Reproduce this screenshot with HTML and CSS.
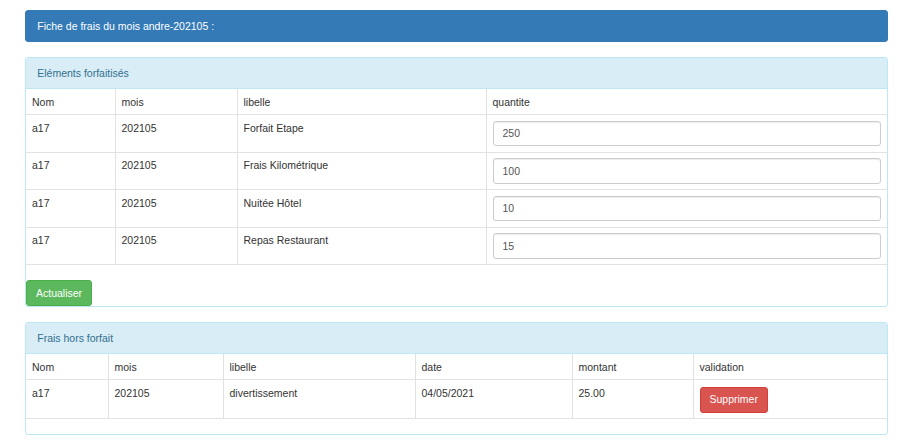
FILE: index.html
```html
<!DOCTYPE html>
<html lang="fr">
<head>
<meta charset="utf-8">
<title>Fiche de frais</title>
<link rel="stylesheet" href="styles.css">
</head>
<body>
<div class="title-bar">Fiche de frais du mois andre-202105 :</div>

<div class="panel">
  <div class="panel-heading">Eléments forfaitisés</div>
  <table class="grid">
    <colgroup><col class="w89"><col class="w122"><col class="w249"><col></colgroup>
    <tr><td>Nom</td><td>mois</td><td>libelle</td><td>quantite</td></tr>
    <tr><td>a17</td><td>202105</td><td>Forfait Etape</td><td><input class="field" type="text" value="250"></td></tr>
    <tr><td>a17</td><td>202105</td><td>Frais Kilométrique</td><td><input class="field" type="text" value="100"></td></tr>
    <tr><td>a17</td><td>202105</td><td>Nuitée Hôtel</td><td><input class="field" type="text" value="10"></td></tr>
    <tr><td>a17</td><td>202105</td><td>Repas Restaurant</td><td><input class="field" type="text" value="15"></td></tr>
  </table>
  <button class="btn btn-success" type="button">Actualiser</button>
</div>

<div class="panel">
  <div class="panel-heading">Frais hors forfait</div>
  <table class="grid">
    <colgroup><col class="w82"><col class="w115"><col class="w192"><col class="w157"><col class="w121"><col></colgroup>
    <tr><td>Nom</td><td>mois</td><td>libelle</td><td>date</td><td>montant</td><td>validation</td></tr>
    <tr><td>a17</td><td>202105</td><td>divertissement</td><td>04/05/2021</td><td>25.00</td><td><button class="btn btn-danger" type="button">Supprimer</button></td></tr>
  </table>
</div>
</body>
</html>
```

FILE: styles.css
```css
* { box-sizing: border-box; }

html, body {
  margin: 0;
  background: #fff;
}

body {
  padding: 10px 13px 0 25px;
  font-family: "Liberation Sans", Arial, Helvetica, sans-serif;
  font-size: 10.5px;
  line-height: 15px;
  color: #333;
}

.title-bar {
  background: #337ab7;
  border: 1px solid #337ab7;
  border-radius: 3px;
  color: #fff;
  padding: 7.5px 11.25px;
  margin-bottom: 15px;
}

.panel {
  border: 1px solid #bce8f1;
  border-radius: 3px;
  margin-bottom: 15px;
  background: #fff;
  overflow: hidden;
}

.panel-heading {
  background: #d9edf7;
  color: #31708f;
  border-bottom: 1px solid #bce8f1;
  padding: 7.5px 11.25px;
}

.grid {
  width: 100%;
  border-collapse: collapse;
  table-layout: fixed;
  margin-bottom: 15px;
}

.grid td {
  padding: 5.5px 6px;
  line-height: 14px;
  vertical-align: top;
  border-left: 1px solid #e2e2e2;
  border-bottom: 1px solid #e2e2e2;
  text-align: left;
}

.grid td:first-child { border-left: 0; }

.w89 { width: 89px; }
.w122 { width: 122px; }
.w249 { width: 249px; }
.w82 { width: 82px; }
.w115 { width: 115px; }
.w192 { width: 192px; }
.w157 { width: 157px; }
.w121 { width: 121px; }

.field {
  display: block;
  width: 100%;
  height: 25.5px;
  margin: 0;
  padding: 4.5px 9px;
  font-family: inherit;
  font-size: 10.5px;
  line-height: 15px;
  color: #555;
  background: #fff;
  border: 1px solid #ccc;
  border-radius: 3px;
  box-shadow: inset 0 1px 1px rgba(0,0,0,.075);
}

.btn {
  display: inline-block;
  margin: 0;
  padding: 4.5px 9px;
  font-family: inherit;
  font-size: 10.5px;
  line-height: 15px;
  color: #fff;
  border: 1px solid transparent;
  border-radius: 3px;
  cursor: pointer;
  vertical-align: top;
}

.btn-success {
  background: #5cb85c;
  border-color: #4cae4c;
  display: block;
}

.btn-danger {
  background: #d9534f;
  border-color: #d43f3a;
  margin-top: 1px;
}
```
